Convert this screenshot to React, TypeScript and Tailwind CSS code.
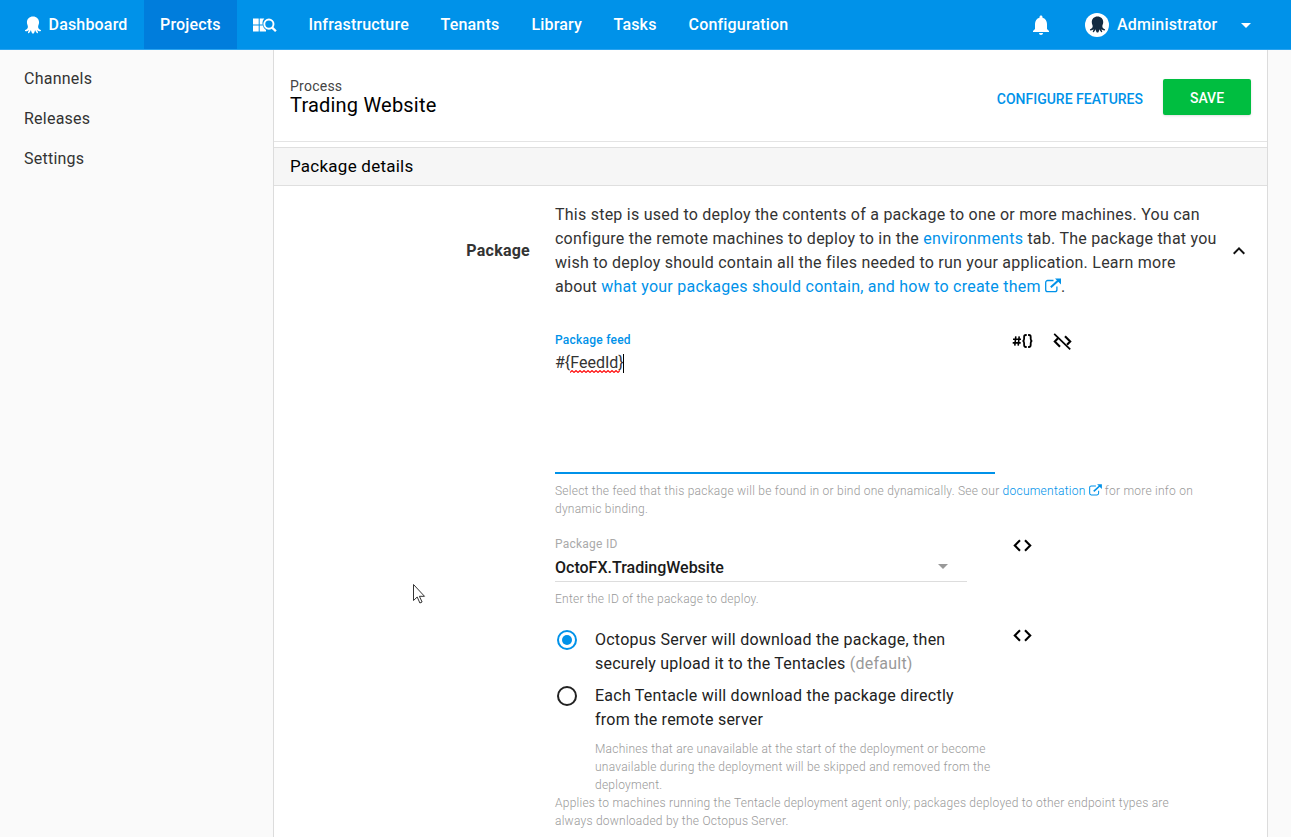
import React from "react";
import { MdNotifications, MdArrowDropDown, MdKeyboardArrowUp } from "react-icons/md";

function Octopus({ className }: { className: string }) {
  return (
    <svg viewBox="0 0 18 19" className={className} fill="currentColor">
      <path d="M9 .5C5.200.5 2.600 3.200 2.600 6.700c0 2 .8 3.100 1 4.500.2 1.900-1.200 2.900-2.800 3.700-.5.300-.3 1.200.5 1.300 1.300.1 2.400-.5 3.300-1.300-.1 1.100-.7 1.700-.9 2.500-.1.700.6 1 1.200.5 1-.8 1.500-1.900 1.900-3 .2 1.200.5 2.100 1.200 3.200.4.500 1.600.5 2 0 .7-1.100 1-2 1.200-3.200.4 1.100.9 2.200 1.900 3 .6.500 1.300.2 1.200-.5-.2-.8-.8-1.400-.9-2.500.9.800 2 1.400 3.300 1.300.8-.1 1-1 .5-1.300-1.600-.8-3-1.800-2.800-3.700.2-1.400 1-2.500 1-4.500C15.400 3.200 12.800.5 9 .5z" />
    </svg>
  );
}

function ProjectSearch() {
  return (
    <svg viewBox="0 0 24 16" className="h-4 w-6" fill="currentColor">
      <path d="M0 1.500h5.700v6H0zM0 8.500h5.700v6H0zM6.700 1.500h4.600A6.200 6.200 0 0 0 9.700 7.500h-3zM6.700 8.500h3.200a6.200 6.200 0 0 0 3.100 4.500v1.500H6.700z" />
      <circle cx="15.900" cy="7.100" r="4.600" fill="none" stroke="currentColor" strokeWidth="1.900" />
      <path d="M19.200 10.600l3.700 3.700" fill="none" stroke="currentColor" strokeWidth="2.300" />
    </svg>
  );
}

function External({ className }: { className: string }) {
  return (
    <svg viewBox="0 0 16 15" className={className} fill="none" stroke="currentColor">
      <path d="M8.500 2.500H2.700A2 2 0 0 0 .7 4.500v7.200a2 2 0 0 0 2 2h7.200a2 2 0 0 0 2-2V8.500" strokeWidth="1.300" />
      <path d="M5.800 9.200L13.500 2.200" strokeWidth="2" />
      <path d="M10 .4h6v6z" fill="currentColor" stroke="none" />
    </svg>
  );
}

function Code({ className }: { className: string }) {
  return (
    <svg viewBox="0 0 21 21" className={className} fill="none" stroke="currentColor" strokeWidth="2.100">
      <path d="M8 5.300L2.800 10.500L8 15.700M13 5.300l5.200 5.200L13 15.700" />
    </svg>
  );
}

function CodeOff({ className }: { className: string }) {
  return (
    <svg viewBox="0 0 21 21" className={className} fill="none" stroke="currentColor" strokeWidth="2.100">
      <path d="M6 7.200L2.800 10.500L8 15.700M13 5.300l5.200 5.200L15 13.700" />
      <path d="M2.200 2.900L18.200 18.400" strokeWidth="1.700" />
    </svg>
  );
}

function Squiggle() {
  return (
    <svg viewBox="0 0 50 3" className="absolute top-[19px] left-0 h-[3px] w-[50px]" fill="none" stroke="#ff1010" strokeWidth="1.100">
      <path d="M0 2.500l2-2 2 2 2-2 2 2 2-2 2 2 2-2 2 2 2-2 2 2 2-2 2 2 2-2 2 2 2-2 2 2 2-2 2 2 2-2 2 2 2-2 2 2 2-2 2 2 2-2" />
    </svg>
  );
}

const navItem = "flex h-full items-center px-4";

export default function App() {
  return (
    <div className="relative flex h-[837px] w-[1291px] flex-col overflow-hidden bg-[#fafafa] font-['Roboto',sans-serif] text-base tracking-[0.24px] text-[#333]">
      <header className="flex h-[50px] shrink-0 border-b border-[#2ba3ef] bg-[#0092e9] font-medium tracking-[0.18px] text-white">
        <nav className="flex h-full flex-1">
          <a className="flex h-full w-36 items-center pl-6">
            <Octopus className="mr-[6.500px] h-[18px] w-[18px]" />Dashboard
          </a>
          <a className="flex h-[49px] w-[93px] items-center bg-[#007ddc] pl-4">Projects</a>
          <a className="flex h-full w-[55px] items-center pl-4"><ProjectSearch /></a>
          <a className={navItem + " ml-[0.500px] w-[132px]"}>Infrastructure</a>
          <a className={navItem + " w-[91px]"}>Tenants</a>
          <a className={navItem + " w-[82px]"}>Library</a>
          <a className={navItem + " w-[75px]"}>Tasks</a>
          <a className={navItem}>Configuration</a>
        </nav>
        <div className="flex h-full w-[262px] items-center">
          <MdNotifications className="h-6 w-6" />
          <span className="ml-8 flex h-6 w-6 items-center justify-center rounded-full bg-white text-[#132b42]">
            <Octopus className="h-[17px] w-[17px]" />
          </span>
          <span className="ml-2 w-[117px] whitespace-nowrap">Administrator</span>
          <MdArrowDropDown className="h-6 w-6" />
        </div>
      </header>

      <div className="flex min-h-0 flex-1">
        <aside className="w-[273px] shrink-0 pt-[9px]">
          {["Channels", "Releases", "Settings"].map((t) => (
            <a key={t} className="flex h-10 items-center pl-6">{t}</a>
          ))}
        </aside>

        <main className="w-[995px] shrink-0 border-x border-[#dcdcdc] bg-white">
          <div className="flex h-[92px] items-center justify-between border-b border-[#e4e4e4] px-4">
            <div className="pt-1">
              <div className="text-sm leading-[16px] text-[#444]">Process</div>
              <h1 className="text-xl leading-[23px] tracking-[0.2px] text-black">Trading Website</h1>
            </div>
            <div className="flex items-center gap-5 pt-[3px] text-sm font-medium tracking-normal">
              <a className="pt-[3px] text-[#0092e9]">CONFIGURE FEATURES</a>
              <button className="h-9 w-[88px] rounded-xs bg-[#00be40] pt-px text-white shadow">SAVE</button>
            </div>
          </div>
          <h2 className="mt-[5px] flex h-[39px] items-center border-y border-[#dfdfdf] bg-[#f6f6f6] pl-4 text-[17px] text-black">Package details</h2>

          <div className="flex pt-[17px]">
            <div className="w-[256px] shrink-0 pt-[36px] text-right font-bold">Package</div>
            <div className="ml-[25px] w-[696px] whitespace-nowrap">
              <div className="flex items-center">
                <p className="w-[672px] shrink-0 leading-6">
                  This step is used to deploy the contents of a package to one or more machines. You can<br />
                  configure the remote machines to deploy to in the <a className="text-[#0092e9]">environments</a> tab. The package that you<br />
                  wish to deploy should contain all the files needed to run your application. Learn more<br />
                  about <a className="text-[#0092e9]">what your packages should contain, and how to create them <External className="-mt-1 inline h-[15px] w-4" /></a>.
                </p>
                <MdKeyboardArrowUp className="h-6 w-6 shrink-0 text-[#111]" />
              </div>

              <div className="mt-[29px] flex h-[146px]">
                <div className="flex w-[440px] flex-col border-b-2 border-[#0092e9]">
                  <label className="pt-[3px] text-xs leading-[18px] font-medium text-[#0092e9]">Package feed</label>
                  <div className="mt-0.5 flex items-center leading-6 tracking-normal">
                    #{"{"}<span className="relative">FeedId<Squiggle /></span>{"}"}
                    <span className="-ml-px h-[19px] w-px bg-black" />
                  </div>
                </div>
                <div className="flex h-6 pl-[15px] text-black">
                  <svg viewBox="0 0 24 24" className="h-6 w-6 translate-x-px translate-y-px" fill="none" stroke="currentColor">
                    <path d="M4.800 7.300L3.800 16.700M8.200 7.300L7.200 16.700M2 10.300h8M1.700 13.900h8" strokeWidth="1.600" />
                    <path d="M15.700 6h-.9c-1.200 0-1.700.7-1.700 1.900v2c0 1.200-.5 2-1.500 2.100 1 .1 1.500.9 1.500 2.100v2c0 1.200.5 1.900 1.700 1.900h.9M17.100 6h.9c1.200 0 1.700.7 1.700 1.900v2c0 1.200.5 2 1.500 2.100-1 .1-1.500.9-1.500 2.100v2c0 1.200-.5 1.900-1.700 1.900h-.9" strokeWidth="1.800" />
                  </svg>
                  <CodeOff className="ml-[18px] h-[21px] w-[21px] translate-y-[3px]" />
                </div>
              </div>

              <p className="mt-2 text-xs leading-[18px] font-light text-[#999]">
                Select the feed that this package will be found in or bind one dynamically. See our <a className="text-[#0092e9]">documentation <External className="-mt-1 inline h-3 w-[13px]" /></a> for more info on<br />dynamic binding.
              </p>

              <div className="mt-4 flex">
                <div className="w-[412px] border-b border-[#ddd]">
                  <label className="block pt-px text-xs leading-[18px] text-[#aaa]">Package ID</label>
                  <div className="flex h-[28px] items-center justify-between pt-px pr-3 font-medium tracking-normal text-[#1a1a1a]">
                    OctoFX.TradingWebsite<MdArrowDropDown className="h-6 w-6 -translate-y-0.5 text-[#999]" />
                  </div>
                </div>
                <Code className="ml-[45px] h-[21px] w-[21px] translate-y-px text-black" />
              </div>
              <p className="mt-2 text-xs leading-[18px] font-light text-[#999]">Enter the ID of the package to deploy.</p>

              <div className="mt-5 flex leading-6 text-[#222]">
                <span className="mt-0.5 ml-0.5 flex h-5 w-5 items-center justify-center rounded-full border-2 border-[#0092e9]"><i className="h-2.5 w-2.5 rounded-full bg-[#0092e9]" /></span>
                <div className="ml-[18px] w-[417px]">Octopus Server will download the package, then<br />securely upload it to the Tentacles <span className="text-[#999]">(default)</span></div>
                <Code className="-mt-[3px] h-[21px] w-[21px] text-black" />
              </div>
              <div className="mt-2 flex leading-6 text-[#222]">
                <span className="mt-0.5 ml-0.5 h-5 w-5 rounded-full border-2 border-[#222]" />
                <div className="ml-[18px]">Each Tentacle will download the package directly<br />from the remote server</div>
              </div>
              <div className="mt-2 text-xs leading-[18px] font-light text-[#999]">
                <p className="pl-10">Machines that are unavailable at the start of the deployment or become<br />unavailable during the deployment will be skipped and removed from the<br />deployment.</p>
                <p>Applies to machines running the Tentacle deployment agent only; packages deployed to other endpoint types are<br />always downloaded by the Octopus Server.</p>
              </div>
            </div>
          </div>
        </main>
      </div>

      <svg viewBox="0 0 14 21" className="absolute top-[583px] left-[412px] h-[21px] w-[14px]" fill="white" stroke="#333" strokeWidth="1">
        <path d="M1.500 1.500v16l3.700-3.500 2.700 6 2.200-1-2.700-5.700H12.500z" />
      </svg>
    </div>
  );
}
